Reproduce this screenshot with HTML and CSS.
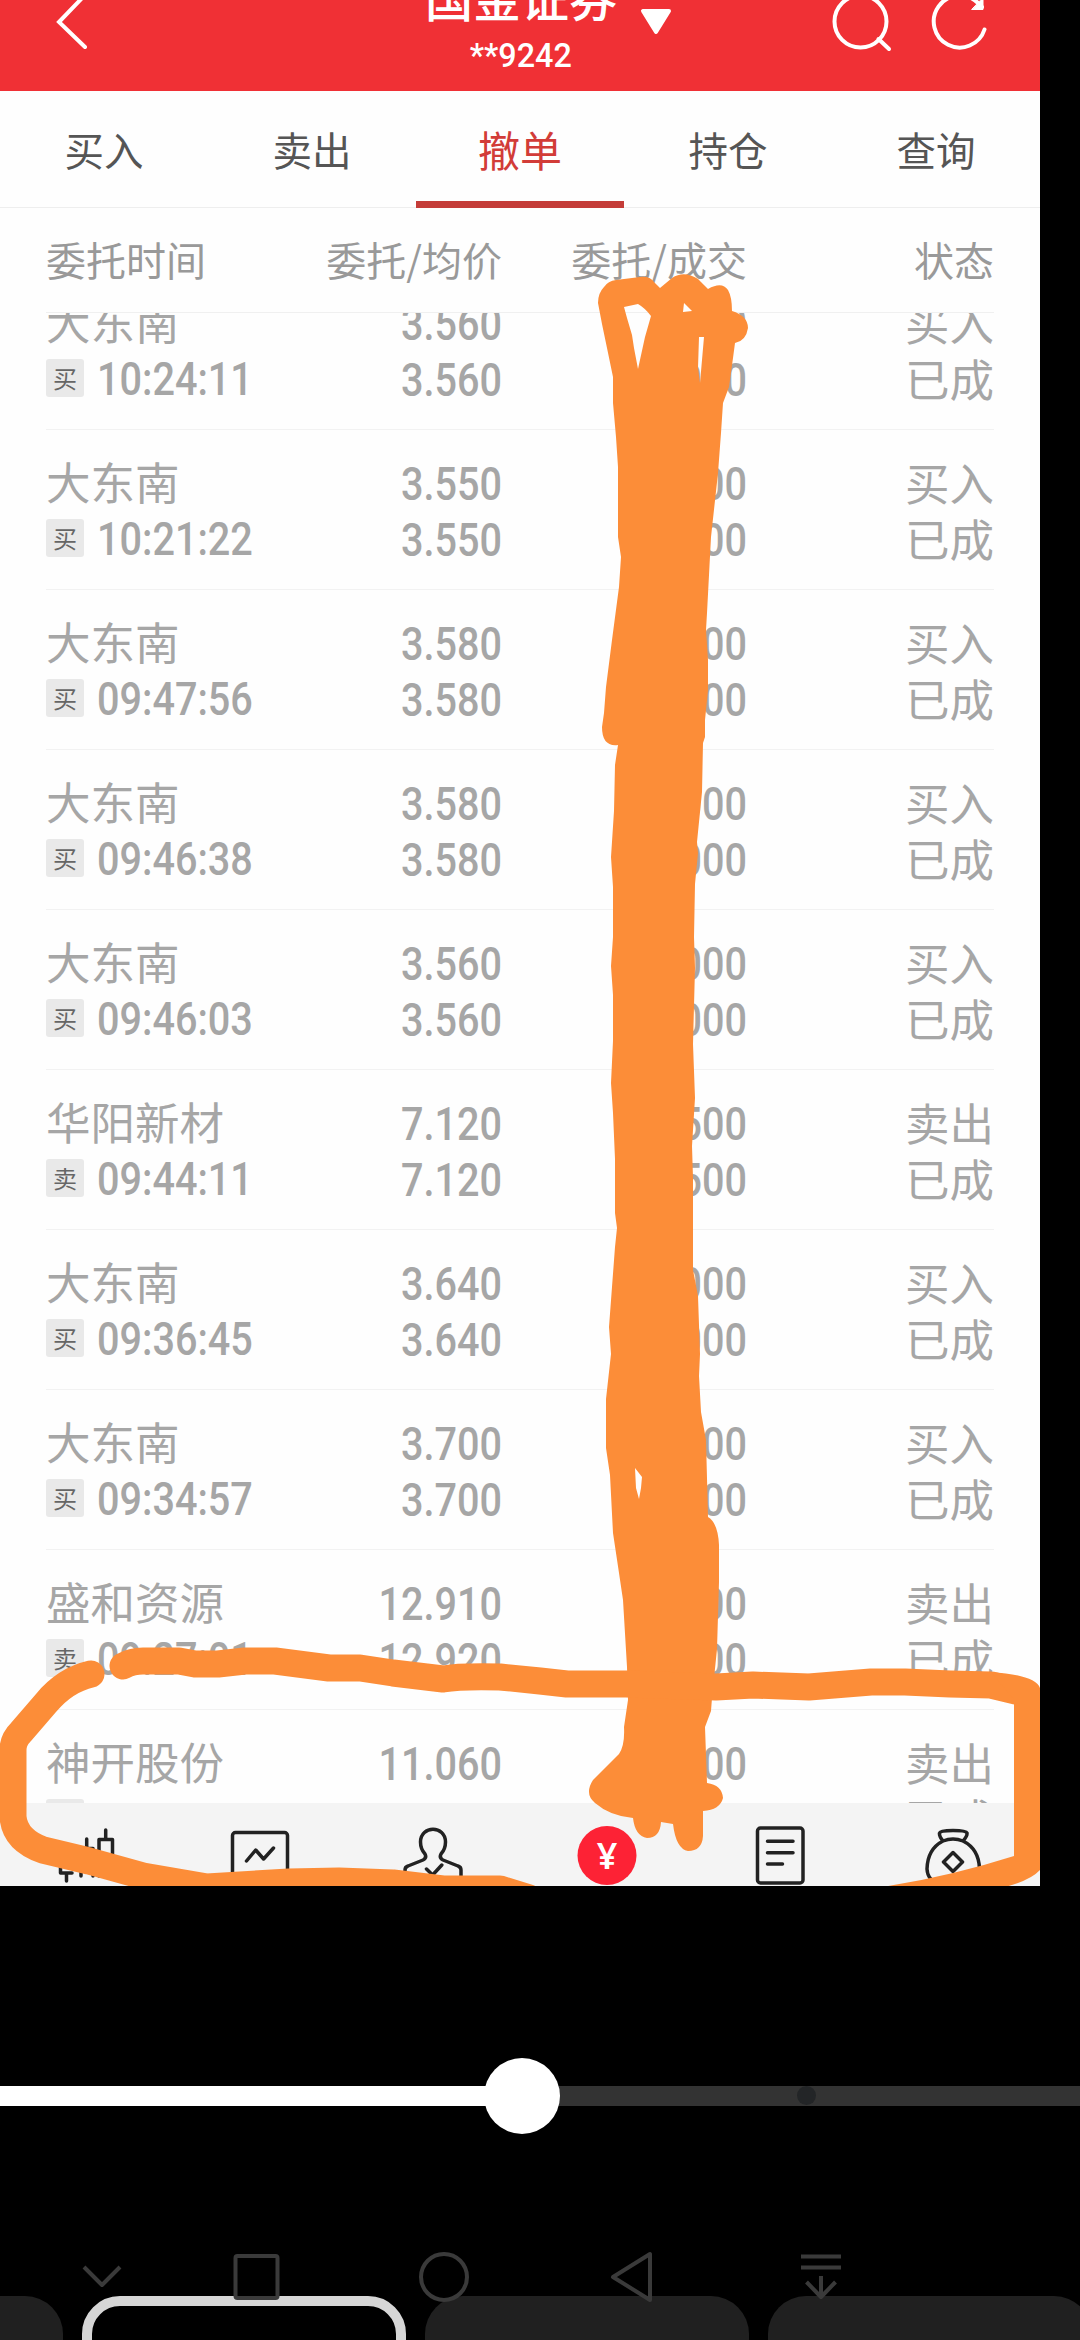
FILE: index.html
```html
<!DOCTYPE html>
<html lang="zh-CN">
<head>
    <meta charset="UTF-8">
    <meta name="viewport" content="width=device-width, initial-scale=1.0">
    <title>撤单</title>
    <link rel="stylesheet" href="styles.css">
</head>
<body>
    <div class="screen">
        <!-- Header -->
        <div class="header">
            <svg class="back" width="40" height="60" viewBox="0 0 40 60"><path d="M33 5L7 32L33 57"/></svg>
            <div class="account">
                <div class="broker">国金证券</div>
                <div class="number"><span class="num">**9242</span></div>
            </div>
            <svg class="arrow" width="32" height="28" viewBox="0 0 32 28"><path d="M3 3H29L16 24Z"/></svg>
            <div class="tools">
                <svg width="64" height="70" viewBox="0 0 64 70"><circle cx="31.500" cy="36.500" r="26"/><path d="M49.500 54L60 64"/></svg>
                <svg width="64" height="70" viewBox="0 0 64 70"><path d="M56.500 44.500A26 26 0 1 1 50 18L54 22"/><path class="head" d="M55 13V24.500H44Z"/></svg>
            </div>
        </div>

        <!-- Tabs -->
        <div class="tabs">
            <div class="tab">买入</div>
            <div class="tab">卖出</div>
            <div class="tab active">撤单</div>
            <div class="tab">持仓</div>
            <div class="tab">查询</div>
        </div>

        <!-- Order table -->
        <div class="columns">
            <div>委托时间</div>
            <div>委托/均价</div>
            <div>委托/成交</div>
            <div>状态</div>
        </div>
        <div class="orders">
            <div class="row">
                <div class="stock"><p>大东南</p><p><i>买</i><span class="num">10:24:11</span></p></div>
                <div class="value"><p class="num">3.560</p><p class="num">3.560</p></div>
                <div class="value"><p class="num">1000</p><p class="num">1000</p></div>
                <div class="status"><p>买入</p><p>已成</p></div>
            </div>
            <div class="row">
                <div class="stock"><p>大东南</p><p><i>买</i><span class="num">10:21:22</span></p></div>
                <div class="value"><p class="num">3.550</p><p class="num">3.550</p></div>
                <div class="value"><p class="num">1000</p><p class="num">1000</p></div>
                <div class="status"><p>买入</p><p>已成</p></div>
            </div>
            <div class="row">
                <div class="stock"><p>大东南</p><p><i>买</i><span class="num">09:47:56</span></p></div>
                <div class="value"><p class="num">3.580</p><p class="num">3.580</p></div>
                <div class="value"><p class="num">1000</p><p class="num">1000</p></div>
                <div class="status"><p>买入</p><p>已成</p></div>
            </div>
            <div class="row">
                <div class="stock"><p>大东南</p><p><i>买</i><span class="num">09:46:38</span></p></div>
                <div class="value"><p class="num">3.580</p><p class="num">3.580</p></div>
                <div class="value"><p class="num">1000</p><p class="num">1000</p></div>
                <div class="status"><p>买入</p><p>已成</p></div>
            </div>
            <div class="row">
                <div class="stock"><p>大东南</p><p><i>买</i><span class="num">09:46:03</span></p></div>
                <div class="value"><p class="num">3.560</p><p class="num">3.560</p></div>
                <div class="value"><p class="num">1000</p><p class="num">1000</p></div>
                <div class="status"><p>买入</p><p>已成</p></div>
            </div>
            <div class="row">
                <div class="stock"><p>华阳新材</p><p><i>卖</i><span class="num">09:44:11</span></p></div>
                <div class="value"><p class="num">7.120</p><p class="num">7.120</p></div>
                <div class="value"><p class="num">500</p><p class="num">500</p></div>
                <div class="status"><p>卖出</p><p>已成</p></div>
            </div>
            <div class="row">
                <div class="stock"><p>大东南</p><p><i>买</i><span class="num">09:36:45</span></p></div>
                <div class="value"><p class="num">3.640</p><p class="num">3.640</p></div>
                <div class="value"><p class="num">1000</p><p class="num">1000</p></div>
                <div class="status"><p>买入</p><p>已成</p></div>
            </div>
            <div class="row">
                <div class="stock"><p>大东南</p><p><i>买</i><span class="num">09:34:57</span></p></div>
                <div class="value"><p class="num">3.700</p><p class="num">3.700</p></div>
                <div class="value"><p class="num">1000</p><p class="num">1000</p></div>
                <div class="status"><p>买入</p><p>已成</p></div>
            </div>
            <div class="row">
                <div class="stock"><p>盛和资源</p><p><i>卖</i><span class="num">09:27:01</span></p></div>
                <div class="value"><p class="num">12.910</p><p class="num">12.920</p></div>
                <div class="value"><p class="num">500</p><p class="num">500</p></div>
                <div class="status"><p>卖出</p><p>已成</p></div>
            </div>
            <div class="row">
                <div class="stock"><p>神开股份</p><p><i>卖</i></p></div>
                <div class="value"><p class="num">11.060</p></div>
                <div class="value"><p class="num">500</p></div>
                <div class="status"><p>卖出</p><p>已成</p></div>
            </div>
        </div>

        <!-- App navigation -->
        <div class="nav">
            <svg viewBox="0 0 60 60"><path d="M48.700 4V13M42 50V13.500H55.500V50ZM29.700 13V22M24 50V22.500H36V50M3.500 30V47H15M9.500 47V55"/></svg>
            <svg viewBox="0 0 60 60"><rect x="2.500" y="6.500" width="55" height="52" rx="3"/><path d="M16.500 35L25.700 24L33.600 33L43.500 22"/></svg>
            <svg viewBox="0 0 60 60"><path d="M2 60V44Q2 41 5 40L20 34Q24 32 22 28Q17.500 23 17.500 16C17.500 -1 42.500 -1 42.500 16Q42.500 23 38 28Q36 32 40 34L55 40Q58 41 58 44V60M23.500 43L29.600 49L38.800 39"/></svg>
            <svg viewBox="0 0 60 60"><circle class="coin" cx="30" cy="29.500" r="29.500"/><text x="30" y="43">¥</text></svg>
            <svg viewBox="0 0 60 60"><rect x="7.500" y="2" width="45.500" height="55" rx="3"/><path d="M17.500 15.300H43M17.500 26.700H43M17.500 38H32.500"/></svg>
            <svg viewBox="0 0 60 60"><path d="M20 15Q16 10 16.500 7Q17 4.500 30 4.500Q43 4.500 44 7Q44.500 10 40 15M20 15Q30 11 40 15Q56 23 56.500 43Q55 60 30 60Q5 60 4 43Q4.500 23 20 15M30 26.500L39.500 36L30 45.500L20.500 36Z"/></svg>
        </div>

        <!-- Marker strokes -->
        <svg class="marker" width="1040" height="1886" viewBox="0 0 1040 1886">
            <path class="fill" fill-rule="evenodd" d="M598 303Q598 293 604 287Q608 281 616 280L640 277Q650 276 654 282L660 288L672 278Q684 270 698 279L708 289Q722 281 728 290Q732 297 732 311Q748 316 748 328Q746 341 735 343L733 358L729 387L723 403L721 433L718 473L711 537L707 613L706 630L708 660V690L705 720V737L703 743L702 792L697 842L698 853L695 884L694 937L695 968L693 1044L695 1098L692 1146L693 1178V1270L698 1296L700 1354L699 1376L701 1412L706 1440L708 1517Q718 1523 719 1545V1582L717 1649L712 1698L711 1711L705 1727L707 1783Q722 1785 723 1798Q720 1810 703 1811V1836Q702 1851 688 1851Q676 1849 673 1824L661 1822Q660 1838 647 1838Q635 1836 633 1818Q610 1816 595 1803Q584 1794 593 1780L619 1754Q625 1745 624 1727L628 1700L627 1667L623 1600L619 1573L613 1533L610 1475L606 1448V1399L611 1354L609 1327L612 1287L615 1247L617 1228L615 1213V1159L613 1113L611 1083L613 1041V995L611 966L613 937V887L611 857L614 811L615 765L618 745Q602 747 602 727L604 713L606 687L612 640L619 587L621 557L618 537V467L616 437L613 403V377L607 348L602 324ZM624 307L638 304Q645 308 651 316L645 337L638 369L634 348L632 335L627 318ZM684 303L692 311L683 312ZM699 337H704L700 383L698 368ZM635 1468L642 1477L641 1488L639 1499L636 1488Z"/>
            <path class="line" d="M123 1666Q132 1661 143 1661H179L195 1664H218L245 1661H275L329 1668H360L393 1673L443 1679Q460 1676 500 1677L540 1681L567 1684H626L716 1687L753 1685L809 1687L871 1682H905L950 1684L991 1685L1016 1691"/>
            <path class="line" d="M91 1674Q65 1680 46 1703L21 1732Q13 1740 13 1750V1817Q15 1840 43 1850L89 1861L143 1876L207 1887L289 1882L339 1881L393 1883L443 1889H500L529 1898"/>
            <path class="fill" d="M991 1672Q1035 1675 1040 1688V1870Q1030 1881 1001 1888H875Q945 1878 1014 1856V1700Z"/>
        </svg>
    </div>

    <!-- Slider -->
    <div class="slider">
        <div class="played"></div>
        <div class="thumb"></div>
        <div class="rest"><div class="tick"></div></div>
    </div>

    <div class="cards">
        <div class="card"></div>
        <div class="card selected"></div>
        <div class="card"></div>
        <div class="card"></div>
    </div>

    <!-- System keys lie over the cards -->
    <svg class="keys" width="1080" height="100" viewBox="0 2240 1080 100">
        <path d="M84 2267L102 2285L120 2267"/>
        <rect x="235.500" y="2256" width="42" height="42" rx="2"/>
        <circle cx="444" cy="2277" r="23"/>
        <path d="M613 2277L650 2254V2300Z"/>
        <path d="M801 2256.500H841M801 2267.500H841M821 2276V2297M806.500 2282L821 2297L835.500 2282"/>
    </svg>
</body>
</html>
```
FILE: styles.css
```css
/* Global Styles */
body, html {
    margin: 0;
    padding: 0;
    height: 100%;
    background: #000;
    overflow: hidden;
    font-family: 'Noto Sans CJK SC', sans-serif;
}

body {
    position: relative;
}

p {
    margin: 0;
}

.screen {
    position: relative;
    display: flex;
    flex-direction: column;
    width: 1040px;
    height: 1886px;
    background: #fefefe;
    overflow: hidden;
}

/* Narrow digits */
.num {
    font-family: 'Roboto', sans-serif;
    transform: scaleX(0.87);
    transform-origin: right center;
}

/* Header */
.header {
    display: flex;
    height: 91px;
    flex-shrink: 0;
    background: #f03035;
    color: #fff;
}

.header svg {
    fill: none;
    stroke: #fff;
    stroke-width: 4;
    stroke-linecap: round;
    flex-shrink: 0;
}

.header .back {
    margin: -10px 0 0 52px;
}

.account {
    width: 196px;
    margin-left: 331px;
    text-align: center;
}

.broker {
    height: 36px;
    line-height: 72px;
    margin-top: -40px;
    font-size: 48px;
    font-weight: 500;
    white-space: nowrap;
}

.number {
    font-size: 34px;
    font-weight: 500;
    line-height: 40px;
    margin-top: 37px;
}

.number .num {
    display: inline-block;
    transform: scaleX(0.95);
    transform-origin: center;
}

.header .arrow {
    margin: 8px 0 0 21px;
    fill: #fff;
    stroke-linejoin: round;
}

.header .head {
    fill: #fff;
    stroke-width: 1;
}

.tools {
    display: flex;
    gap: 35px;
    margin: -15px 0 0 157px;
}

/* Tabs */
.tabs {
    display: flex;
    height: 116px;
    flex-shrink: 0;
    border-bottom: 1px solid #eee;
    color: #555;
    font-size: 39.500px;
}

.tab {
    flex: 1;
    height: 110px;
    line-height: 115px;
    text-align: center;
}

.tab.active {
    color: #d23c38;
    font-size: 42px;
    border-bottom: 7px solid #c43c38;
}

/* Order table */
.columns, .row {
    display: grid;
    grid-template-columns: 250px 206px 245px 247px;
    margin: 0 46px;
}

.columns {
    height: 104px;
    flex-shrink: 0;
    line-height: 103px;
    border-bottom: 1px solid #f0f0f0;
    color: #999;
    font-size: 40px;
    white-space: nowrap;
}

.columns div {
    text-align: right;
}

.columns div:first-child {
    text-align: left;
}

.orders {
    flex: 1;
    overflow: hidden;
}

.row {
    height: 133px;
    padding-top: 26px;
    border-bottom: 1px solid #f2f2f2;
    color: #a6a6a6;
    font-size: 44.500px;
    line-height: 56px;
}

.row:first-child {
    margin-top: -43px;
}

.stock p:first-child {
    line-height: 50px;
    margin-bottom: 6px;
}

.stock p:last-child {
    display: flex;
    align-items: center;
    height: 56px;
}

.stock i {
    width: 38px;
    height: 38px;
    margin: -4px 13px 0 0;
    background: #e9e9e9;
    border-radius: 3px;
    color: #666;
    font-size: 24px;
    font-style: normal;
    line-height: 37px;
    text-align: center;
}

.stock .num {
    transform-origin: left center;
    font-size: 45.500px;
    font-weight: 500;
}

.value, .status {
    text-align: right;
}

.value {
    padding-top: 1px;
}

.status {
    margin-top: -2px;
}

.value .num {
    font-size: 45.500px;
    font-weight: 500;
}

/* App navigation */
.nav {
    display: flex;
    justify-content: space-around;
    height: 60px;
    padding-top: 23px;
    background: #f4f4f4;
}

.nav svg {
    width: 60px;
    height: 60px;
    fill: none;
    stroke: #222;
    stroke-width: 3.5;
    stroke-linecap: round;
    stroke-linejoin: round;
}

.nav .coin {
    fill: #fd2235;
    stroke: none;
}

.nav text {
    fill: #fff;
    stroke: none;
    font-family: 'Noto Sans', sans-serif;
    font-size: 36px;
    font-weight: 600;
    text-anchor: middle;
}

/* Marker strokes */
.marker {
    position: absolute;
    top: 0;
    left: 0;
}

.marker .fill {
    fill: #fc8d38;
}

.marker .line {
    fill: none;
    stroke: #fc8d38;
    stroke-width: 27;
    stroke-linecap: round;
    stroke-linejoin: round;
}

/* Slider */
.slider {
    display: flex;
    align-items: center;
    height: 76px;
    margin-top: 172px;
}

.played {
    width: 500px;
    height: 20px;
    background: #fff;
}

.thumb {
    width: 76px;
    height: 76px;
    margin: 0 -16px;
    border-radius: 50%;
    background: #fff;
    z-index: 1;
}

.rest {
    flex: 1;
    height: 20px;
    background: #333;
}

.tick {
    width: 19px;
    height: 19px;
    margin-left: 253px;
    border-radius: 50%;
    background: #232527;
}

/* Bottom cards */
.cards {
    display: flex;
    gap: 19px;
    margin: 162px 0 0 -261px;
}

.card {
    box-sizing: border-box;
    width: 324px;
    height: 120px;
    flex-shrink: 0;
    border-radius: 38px;
    background: #202020;
}

.card.selected {
    border: 10px solid #d6d6d6;
    background: #000;
}

.keys {
    position: absolute;
    left: 0;
    top: 2240px;
    fill: none;
    stroke: #3a3a3a;
    stroke-width: 4;
    stroke-linejoin: round;
}
```
